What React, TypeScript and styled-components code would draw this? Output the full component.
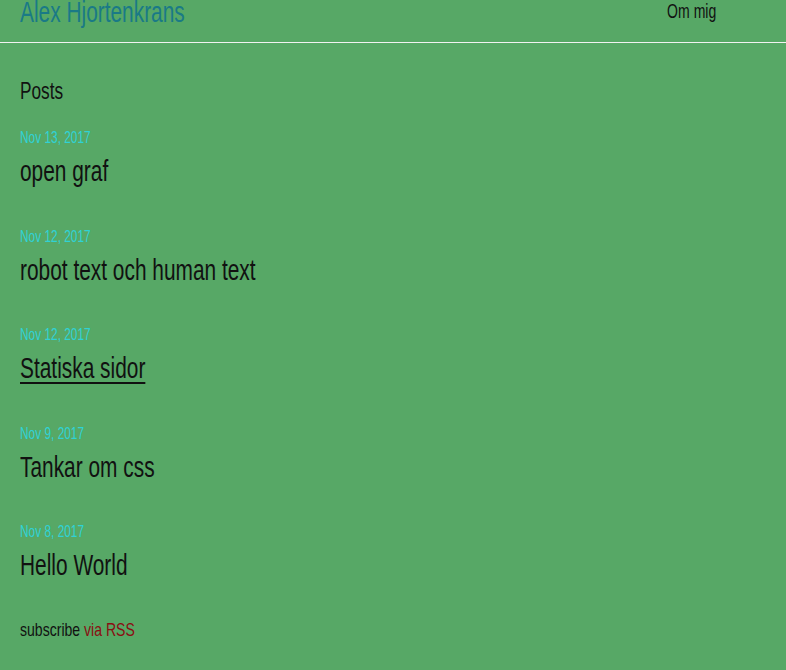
import React from "react";
import styled, { createGlobalStyle, css } from "styled-components";

const Global = createGlobalStyle`
  html, body { margin: 0; padding: 0; background: #57a866; }
  body { font-family: "Liberation Sans", Arial, sans-serif; color: #111; }
`;

const narrow = (scale = 0.72) => css`
  display: inline-block;
  transform: scaleX(${scale});
  transform-origin: left center;
  white-space: nowrap;
`;

const Header = styled.header`
  display: flex;
  justify-content: space-between;
  align-items: flex-start;
  height: 42px;
  border-bottom: 1px solid #f2f2f2;
  padding: 0 70px 0 20px;
`;

const SiteTitle = styled.a`
  ${narrow()}
  font-size: 29px;
  line-height: 29px;
  color: #1a7a86;
  text-decoration: none;
  margin-top: -2.5px;
`;

const NavLink = styled.a`
  ${narrow()}
  transform-origin: right center;
  font-size: 19.5px;
  line-height: 19.5px;
  color: #111;
  text-decoration: none;
  margin-top: 1.5px;
`;

const Main = styled.main`
  padding: 0 20px;
  display: flex;
  flex-direction: column;
  align-items: flex-start;
`;

const Heading = styled.h1`
  ${narrow(0.75)}
  font-size: 23px;
  font-weight: normal;
  margin: 36.5px 0 26.5px;
  line-height: 23px;
`;

const List = styled.ul`
  list-style: none;
  margin: 0;
  padding: 0;
  display: flex;
  flex-direction: column;
  gap: 41.5px;
`;

const Item = styled.li`
  display: flex;
  flex-direction: column;
  align-items: flex-start;
  gap: 11.5px;
`;

const PostDate = styled.span`
  ${narrow()}
  font-size: 16.5px;
  line-height: 16.5px;
  color: #2fd2d6;
`;

const PostLink = styled.a<{ $underline?: boolean }>`
  ${narrow()}
  font-size: 29px;
  line-height: 29px;
  color: #111;
  text-decoration: ${(p) => (p.$underline ? "underline" : "none")};
  text-underline-offset: 4px;
  text-decoration-thickness: 2px;
`;

const Subscribe = styled.p`
  ${narrow(0.76)}
  font-size: 18.5px;
  margin: 41px 0 0;
  line-height: 18.5px;
`;

const Rss = styled.a`
  color: #8a0d12;
  text-decoration: none;
`;

const posts = [
  { date: "Nov 13, 2017", title: "open graf" },
  { date: "Nov 12, 2017", title: "robot text och human text" },
  { date: "Nov 12, 2017", title: "Statiska sidor", hover: true },
  { date: "Nov 9, 2017", title: "Tankar om css" },
  { date: "Nov 8, 2017", title: "Hello World" },
];

export default function App() {
  return (
    <>
      <Global />
      <Header>
        <SiteTitle href="#">Alex Hjortenkrans</SiteTitle>
        <NavLink href="#">Om mig</NavLink>
      </Header>
      <Main>
        <Heading>Posts</Heading>
        <List>
          {posts.map((p, i) => (
            <Item key={i}>
              <PostDate>{p.date}</PostDate>
              <PostLink href="#" $underline={p.hover}>{p.title}</PostLink>
            </Item>
          ))}
        </List>
        <Subscribe>
          subscribe <Rss href="#">via RSS</Rss>
        </Subscribe>
      </Main>
    </>
  );
}
